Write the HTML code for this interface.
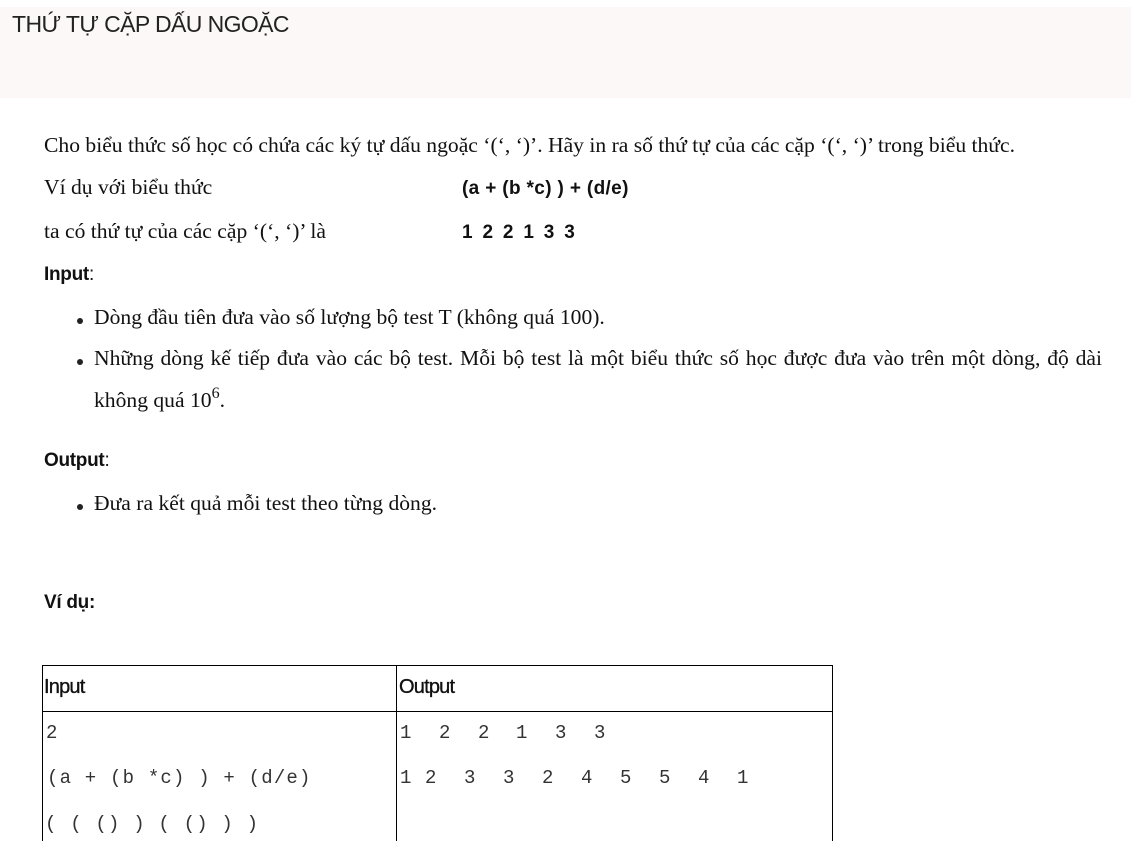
<!DOCTYPE html>
<html><head><meta charset="utf-8"><style>
html,body{margin:0;padding:0;background:#fff;width:1131px;height:841px;overflow:hidden;position:relative}
.hdr{position:absolute;left:0;top:7px;width:1131px;height:91px;background:#fcf8f7}
.title{position:absolute;left:12px;top:11px;font:23px "Liberation Sans",sans-serif;color:#222;letter-spacing:-0.6px}
.s{position:absolute;font:21.6px "Liberation Serif",serif;color:#111;white-space:nowrap}
.b{position:absolute;font:bold 19px "Liberation Sans",sans-serif;color:#111;white-space:nowrap;letter-spacing:-0.3px}
.dot{position:absolute;width:6px;height:6px;border-radius:50%;background:#222}
.m{position:absolute;font:19px "Liberation Mono",monospace;color:#333;white-space:pre;letter-spacing:1.2px}
.o{position:absolute;font:19px "Liberation Mono",monospace;color:#333}
.line{position:absolute;background:#000}
</style></head><body>
<div class="hdr"></div>
<div class="title">THỨ TỰ CẶP DẤU NGOẶC</div>

<div class="s" style="left:44px;top:133px">Cho biểu thức số học có chứa các ký tự dấu ngoặc ‘(‘, ‘)’. Hãy in ra số thứ tự của các cặp ‘(‘, ‘)’ trong biểu thức.</div>
<div class="s" style="left:44px;top:175px">Ví dụ với biểu thức</div>
<div class="b" style="left:462px;top:178px;letter-spacing:0.35px">(a + (b *c) ) + (d/e)</div>
<div class="s" style="left:44px;top:219px">ta có thứ tự của các cặp ‘(‘, ‘)’ là</div>
<div class="b" style="left:462px;top:222px;letter-spacing:2.3px">1 2 2 1 3 3</div>

<div class="b" style="left:44px;top:264px">Input<span style="font-weight:normal">:</span></div>
<div class="dot" style="left:77px;top:318px"></div>
<div class="s" style="left:94px;top:305px">Dòng đầu tiên đưa vào số lượng bộ test T (không quá 100).</div>
<div class="dot" style="left:77px;top:359px"></div>
<div class="s" style="left:94px;top:346px;width:1008px;text-align:justify;text-align-last:justify;white-space:normal">Những dòng kế tiếp đưa vào các bộ test. Mỗi bộ test là một biểu thức số học được đưa vào trên một dòng, độ dài</div>
<div class="s" style="left:94px;top:388px">không quá 10<span style="font-size:16px;position:relative;top:-9px">6</span>.</div>

<div class="b" style="left:44px;top:450px">Output<span style="font-weight:normal">:</span></div>
<div class="dot" style="left:77px;top:504px"></div>
<div class="s" style="left:94px;top:491px">Đưa ra kết quả mỗi test theo từng dòng.</div>

<div class="b" style="left:44px;top:592px">Ví dụ:</div>

<div class="line" style="left:42px;top:665px;width:791px;height:1px"></div>
<div class="line" style="left:42px;top:711px;width:791px;height:1px"></div>
<div class="line" style="left:42px;top:665px;width:1px;height:176px"></div>
<div class="line" style="left:396px;top:665px;width:1px;height:176px"></div>
<div class="line" style="left:832px;top:665px;width:1px;height:176px"></div>
<div class="b" style="left:44px;top:676px;font-weight:normal;font-size:20px;letter-spacing:-0.8px;-webkit-text-stroke:0.3px #000">Input</div>
<div class="b" style="left:399px;top:676px;font-weight:normal;font-size:20px;letter-spacing:-0.8px;-webkit-text-stroke:0.3px #000">Output</div>

<div class="m" style="left:46px;top:722px">2</div>
<div class="m" style="left:47px;top:767px">(a + (b *c) ) + (d/e)</div>
<div class="m" style="left:45px;top:813px">( ( () ) ( () ) )</div>

<div class="o" style="left:400px;top:722px">1</div><div class="o" style="left:439px;top:722px">2</div><div class="o" style="left:478px;top:722px">2</div><div class="o" style="left:516px;top:722px">1</div><div class="o" style="left:555px;top:722px">3</div><div class="o" style="left:594px;top:722px">3</div>
<div class="o" style="left:400px;top:767px">1</div><div class="o" style="left:425px;top:767px">2</div><div class="o" style="left:464px;top:767px">3</div><div class="o" style="left:503px;top:767px">3</div><div class="o" style="left:542px;top:767px">2</div><div class="o" style="left:581px;top:767px">4</div><div class="o" style="left:620px;top:767px">5</div><div class="o" style="left:659px;top:767px">5</div><div class="o" style="left:698px;top:767px">4</div><div class="o" style="left:737px;top:767px">1</div>
</body></html>
